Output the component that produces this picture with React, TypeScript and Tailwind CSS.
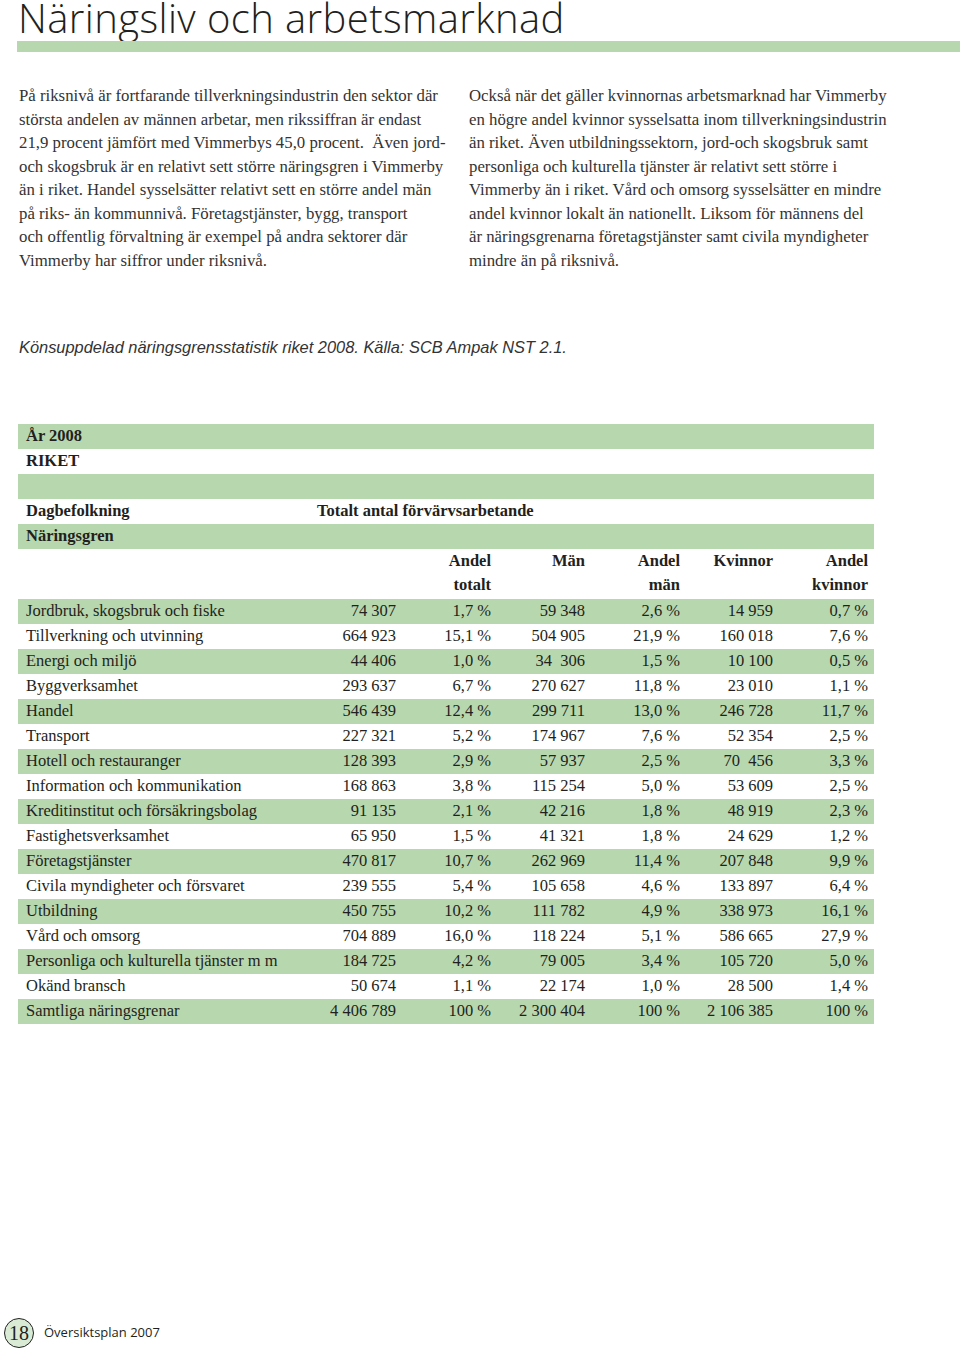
import React from 'react';

const serif = "font-['Liberation_Serif',serif]";
const sans = "font-['Open_Sans',sans-serif]";

const rows: [string, string, string, string, string, string, string][] = [
  ['Jordbruk, skogsbruk och fiske', '74 307', '1,7 %', '59 348', '2,6 %', '14 959', '0,7 %'],
  ['Tillverkning och utvinning', '664 923', '15,1 %', '504 905', '21,9 %', '160 018', '7,6 %'],
  ['Energi och miljö', '44 406', '1,0 %', '34  306', '1,5 %', '10 100', '0,5 %'],
  ['Byggverksamhet', '293 637', '6,7 %', '270 627', '11,8 %', '23 010', '1,1 %'],
  ['Handel', '546 439', '12,4 %', '299 711', '13,0 %', '246 728', '11,7 %'],
  ['Transport', '227 321', '5,2 %', '174 967', '7,6 %', '52 354', '2,5 %'],
  ['Hotell och restauranger', '128 393', '2,9 %', '57 937', '2,5 %', '70  456', '3,3 %'],
  ['Information och kommunikation', '168 863', '3,8 %', '115 254', '5,0 %', '53 609', '2,5 %'],
  ['Kreditinstitut och försäkringsbolag', '91 135', '2,1 %', '42 216', '1,8 %', '48 919', '2,3 %'],
  ['Fastighetsverksamhet', '65 950', '1,5 %', '41 321', '1,8 %', '24 629', '1,2 %'],
  ['Företagstjänster', '470 817', '10,7 %', '262 969', '11,4 %', '207 848', '9,9 %'],
  ['Civila myndigheter och försvaret', '239 555', '5,4 %', '105 658', '4,6 %', '133 897', '6,4 %'],
  ['Utbildning', '450 755', '10,2 %', '111 782', '4,9 %', '338 973', '16,1 %'],
  ['Vård och omsorg', '704 889', '16,0 %', '118 224', '5,1 %', '586 665', '27,9 %'],
  ['Personliga och kulturella tjänster m m', '184 725', '4,2 %', '79 005', '3,4 %', '105 720', '5,0 %'],
  ['Okänd bransch', '50 674', '1,1 %', '22 174', '1,0 %', '28 500', '1,4 %'],
  ['Samtliga näringsgrenar', '4 406 789', '100 %', '2 300 404', '100 %', '2 106 385', '100 %'],
];

const leftText = [
  'På riksnivå är fortfarande tillverkningsindustrin den sektor där',
  'största andelen av männen arbetar, men rikssiffran är endast',
  '21,9 procent jämfört med Vimmerbys 45,0 procent.  Även jord-',
  'och skogsbruk är en relativt sett större näringsgren i Vimmerby',
  'än i riket. Handel sysselsätter relativt sett en större andel män',
  'på riks- än kommunnivå. Företagstjänster, bygg, transport',
  'och offentlig förvaltning är exempel på andra sektorer där',
  'Vimmerby har siffror under riksnivå.',
];

const rightText = [
  'Också när det gäller kvinnornas arbetsmarknad har Vimmerby',
  'en högre andel kvinnor sysselsatta inom tillverkningsindustrin',
  'än riket. Även utbildningssektorn, jord-och skogsbruk samt',
  'personliga och kulturella tjänster är relativt sett större i',
  'Vimmerby än i riket. Vård och omsorg sysselsätter en mindre',
  'andel kvinnor lokalt än nationellt. Liksom för männens del',
  'är näringsgrenarna företagstjänster samt civila myndigheter',
  'mindre än på riksnivå.',
];

const grid = 'grid grid-cols-[299px_85px_95px_94px_95px_93px_95px]';

export default function App() {
  return (
    <div className="w-[960px] min-h-[1358px] bg-white flex flex-col text-[#231f20]">
      {/* Title */}
      <div className="h-[41px] pl-[18px]">
        <h1 className={`${sans} font-light text-[40px] leading-[36px] tracking-[0.4px] whitespace-nowrap`}>
          Näringsliv och arbetsmarknad
        </h1>
      </div>
      <div className="ml-[17px] h-[11px] bg-[#b7d7ae]" />

      {/* Intro columns */}
      <div className={`${serif} grid grid-cols-[450px_1fr] pl-[19px] mt-[32px] text-[16.8px] leading-[23.5px] text-[#333]`}>
        <p className="whitespace-pre">
          {leftText.map((l, i) => (
            <React.Fragment key={i}>{l}<br /></React.Fragment>
          ))}
        </p>
        <p className="whitespace-pre">
          {rightText.map((l, i) => (
            <React.Fragment key={i}>{l}<br /></React.Fragment>
          ))}
        </p>
      </div>

      {/* Caption */}
      <p className={`font-['Liberation_Sans',sans-serif] italic text-[16.4px] leading-[20px] pl-[19px] mt-[65px] text-[#333]`}>
        Könsuppdelad näringsgrensstatistik riket 2008. Källa: SCB Ampak NST 2.1.
      </p>

      {/* Table */}
      <div className={`${serif} ml-[18px] w-[856px] mt-[67px] text-[16.5px] leading-[24px]`}>
        <div className="bg-[#b7d7ae] h-[25px] pl-[8px] font-bold">År 2008</div>
        <div className="h-[25px] pl-[8px] font-bold">RIKET</div>
        <div className="bg-[#b7d7ae] h-[25px]" />
        <div className={`${grid} h-[25px] font-bold`}>
          <div className="pl-[8px]">Dagbefolkning</div>
          <div className="col-span-6 whitespace-nowrap">Totalt antal förvärvsarbetande</div>
        </div>
        <div className="bg-[#b7d7ae] h-[25px] pl-[8px] font-bold">Näringsgren</div>
        <div className={`${grid} h-[50px] font-bold text-right leading-[24px]`}>
          <div />
          <div />
          <div className="pr-[6px]">Andel<br />totalt</div>
          <div className="pr-[6px]">Män</div>
          <div className="pr-[6px]">Andel<br />män</div>
          <div className="pr-[6px]">Kvinnor</div>
          <div className="pr-[6px]">Andel<br />kvinnor</div>
        </div>
        {rows.map((r, i) => (
          <div key={r[0]} className={`${grid} h-[25px] ${i % 2 === 0 ? 'bg-[#b7d7ae]' : ''}`}>
            <div className="pl-[8px] whitespace-nowrap">{r[0]}</div>
            {r.slice(1).map((c, j) => (
              <div key={j} className="pr-[6px] text-right whitespace-pre">{c}</div>
            ))}
          </div>
        ))}
      </div>

      {/* Footer */}
      <div className="mt-auto flex items-center gap-[10px] pl-[4px] pb-[10px]">
        <div className={`${serif} w-[30px] h-[30px] rounded-full border-[1.5px] border-[#222] bg-[#d9ebd4] flex items-center justify-center text-[20px] leading-none`}>
          18
        </div>
        <span className={`${sans} text-[13px]`}>Översiktsplan 2007</span>
      </div>
    </div>
  );
}
